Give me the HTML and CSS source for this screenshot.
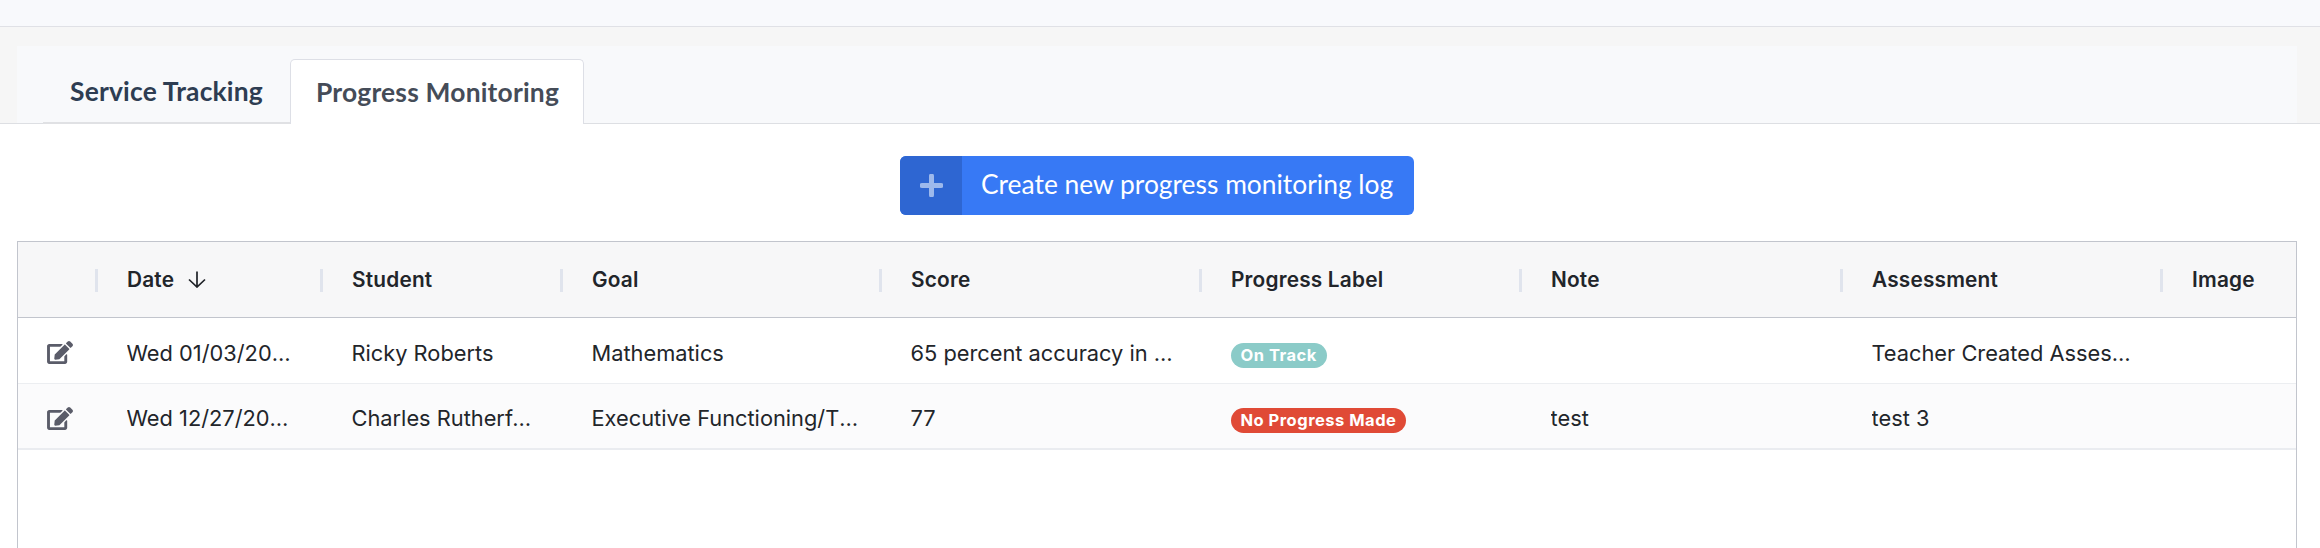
FILE: index.html
```html
<!DOCTYPE html>
<html>

<head>
    <title>Progress Monitoring</title>
    <meta charset="UTF-8">
    <link rel="stylesheet" href="styles.css">
</head>

<body>
    <div class="topbar"></div>
    <div class="tabs-area">
        <div class="tabs">
            <a class="tab">Service Tracking</a>
            <a class="tab tab--active">Progress Monitoring</a>
        </div>
    </div>
    <div class="content">
        <div class="actions">
            <button class="btn-create">
                <span class="btn-create__icon">
                    <svg width="23" height="23" viewBox="0 0 23 23">
                        <path d="M11.5 2v19M2 11.5h19" stroke="#9db9ec" stroke-width="5" stroke-linecap="round" fill="none"/>
                    </svg>
                </span>
                <span class="btn-create__text">Create new progress monitoring log</span>
            </button>
        </div>
        <div class="grid">
            <div class="row row--head">
                <div class="cell cell--icon"></div>
                <div class="cell cell--sep">Date
                    <svg class="sort" width="18" height="17" viewBox="0 0 18 17">
                        <path d="M9 0.5v15.5M1 8.5L9 16l8-7.5" stroke="#1f2227" stroke-width="1.7" fill="none"/>
                    </svg>
                </div>
                <div class="cell cell--sep">Student</div>
                <div class="cell cell--sep">Goal</div>
                <div class="cell cell--sep">Score</div>
                <div class="cell cell--sep">Progress Label</div>
                <div class="cell cell--sep">Note</div>
                <div class="cell cell--sep">Assessment</div>
                <div class="cell cell--sep">Image</div>
            </div>
            <div class="row">
                <div class="cell cell--icon">
                    <svg class="edit" width="26" height="23" viewBox="0 0 576 512">
                        <path d="M402.6 83.2l90.2 90.2c3.8 3.8 3.8 10 0 13.8L274.4 405.6l-92.8 10.3c-12.4 1.4-22.9-9.1-21.5-21.5l10.3-92.8L388.8 83.2c3.8-3.8 10-3.8 13.8 0zm162-22.9l-48.8-48.8c-15.2-15.2-39.9-15.2-55.2 0l-35.4 35.4c-3.8 3.8-3.8 10 0 13.8l90.2 90.2c3.8 3.8 10 3.8 13.8 0l35.4-35.4c15.2-15.3 15.2-40 0-55.2zM384 346.2V448H64V128h229.8c3.2 0 6.2-1.3 8.5-3.5l40-40c7.6-7.6 2.2-20.5-8.5-20.5H48C21.5 64 0 85.5 0 112v352c0 26.5 21.5 48 48 48h352c26.5 0 48-21.5 48-48V306.2c0-10.7-12.9-16-20.5-8.5l-40 40c-2.2 2.3-3.5 5.3-3.5 8.5z"/>
                    </svg>
                </div>
                <div class="cell"><span class="clip">Wed 01/03/2024</span></div>
                <div class="cell"><span class="clip">Ricky Roberts</span></div>
                <div class="cell cell--goal"><span class="clip">Mathematics</span></div>
                <div class="cell"><span class="clip">65 percent accuracy in math problems</span></div>
                <div class="cell"><span class="badge badge--track">On Track</span></div>
                <div class="cell"></div>
                <div class="cell"><span class="clip">Teacher Created Assessment</span></div>
                <div class="cell"></div>
            </div>
            <div class="row row--alt">
                <div class="cell cell--icon">
                    <svg class="edit" width="26" height="23" viewBox="0 0 576 512">
                        <path d="M402.6 83.2l90.2 90.2c3.8 3.8 3.8 10 0 13.8L274.4 405.6l-92.8 10.3c-12.4 1.4-22.9-9.1-21.5-21.5l10.3-92.8L388.8 83.2c3.8-3.8 10-3.8 13.8 0zm162-22.9l-48.8-48.8c-15.2-15.2-39.9-15.2-55.2 0l-35.4 35.4c-3.8 3.8-3.8 10 0 13.8l90.2 90.2c3.8 3.8 10 3.8 13.8 0l35.4-35.4c15.2-15.3 15.2-40 0-55.2zM384 346.2V448H64V128h229.8c3.2 0 6.2-1.3 8.5-3.5l40-40c7.6-7.6 2.2-20.5-8.5-20.5H48C21.5 64 0 85.5 0 112v352c0 26.5 21.5 48 48 48h352c26.5 0 48-21.5 48-48V306.2c0-10.7-12.9-16-20.5-8.5l-40 40c-2.2 2.3-3.5 5.3-3.5 8.5z"/>
                    </svg>
                </div>
                <div class="cell"><span class="clip">Wed 12/27/2023</span></div>
                <div class="cell"><span class="clip">Charles Rutherford</span></div>
                <div class="cell cell--goal"><span class="clip">Executive Functioning/Time Management</span></div>
                <div class="cell"><span class="clip">77</span></div>
                <div class="cell"><span class="badge badge--none">No Progress Made</span></div>
                <div class="cell"><span class="clip">test</span></div>
                <div class="cell"><span class="clip">test 3</span></div>
                <div class="cell"></div>
            </div>
        </div>
    </div>
</body>

</html>
```

FILE: styles.css
```css
* {
    box-sizing: border-box;
}

html,
body {
    height: 100%;
}

body {
    display: flex;
    flex-direction: column;
    margin: 0;
    overflow: hidden;
    background-color: #fff;
    font-family: Inter, "Liberation Sans", sans-serif;
    color: #212529;
}

.topbar {
    height: 27px;
    background-color: #f8f9fc;
    border-bottom: 1px solid #e0e1e6;
}

.tabs-area {
    height: 97px;
    padding: 19px 23px 0 17px;
    background-color: #f6f6f6;
    border-bottom: 1px solid #dddfe3;
}

.tabs {
    display: flex;
    height: 77px;
    padding: 13px 0 0 26px;
    background-color: #f8f9fb;
}

.tab {
    display: flex;
    align-items: center;
    width: 248px;
    height: 65px;
    padding: 0 27px;
    border-bottom: 2px solid #e0e1e4;
    font-family: Lato, sans-serif;
    font-size: 26.4px;
    font-weight: 700;
    letter-spacing: 0.2px;
    white-space: nowrap;
    color: #2e3d52;
}

.tab--active {
    width: 294px;
    padding: 0 25px;
    margin-left: -1px;
    background-color: #fff;
    border: 1px solid #dddfe6;
    border-bottom: none;
    border-radius: 5px 5px 0 0;
    color: #454c58;
}

.content {
    display: flex;
    flex: 1;
    flex-direction: column;
    padding: 0 23px 0 17px;
}

.actions {
    display: flex;
    justify-content: center;
    padding: 32px 0 26px;
}

.btn-create {
    display: flex;
    width: 514px;
    height: 59px;
    padding: 0;
    border: none;
    border-radius: 6px;
    overflow: hidden;
    background-color: #3779f5;
    color: #fff;
    font-family: Lato, sans-serif;
    font-size: 26.4px;
    font-weight: 400;
}

.btn-create__icon {
    display: flex;
    align-items: center;
    justify-content: center;
    width: 62px;
    height: 100%;
    background-color: #2e66d2;
}

.btn-create__text {
    align-self: center;
    padding: 0 0 3px 19px;
    white-space: nowrap;
}

.grid {
    flex: 1;
    border: 1.5px solid #c2c5cd;
    border-bottom: none;
}

.row {
    display: grid;
    grid-template-columns: 77px 225px 240px 319px 320px 320px 321px 320px 1fr;
    height: 66px;
    border-bottom: 1px solid #eceef1;
    font-size: 21.8px;
    color: #22252a;
}

.row--head {
    height: 76px;
    background-color: #f7f7f8;
    border-bottom: 1.5px solid #c2c5cd;
    font-size: 20.8px;
    font-weight: 600;
    letter-spacing: 0.2px;
}

.row--alt {
    background-color: #fbfbfc;
    border-bottom: 2px solid #eaecf0;
}

.cell {
    display: flex;
    align-items: center;
    min-width: 0;
    padding: 4px 26px 0 31.5px;
}

.row--head .cell {
    padding: 0 24px 0 32px;
}

.cell--icon {
    padding: 4px 0 0 29px;
}

.cell--goal {
    padding-right: 18px;
}

.cell--sep {
    position: relative;
}

.cell--sep::before {
    content: "";
    position: absolute;
    top: 27px;
    left: 0;
    width: 3px;
    height: 23px;
    background-color: #e0e4ed;
}

.clip {
    overflow: hidden;
    white-space: nowrap;
    text-overflow: ellipsis;
}

.sort {
    margin-left: 14px;
}

.edit {
    fill: #5a5c69;
}

.badge {
    padding: 0 10px;
    border-radius: 13px;
    margin-top: 5px;
    line-height: 25px;
    font-size: 16.5px;
    font-weight: 700;
    letter-spacing: 0.5px;
    color: #fff;
    white-space: nowrap;
}

.badge--track {
    background-color: #8bcbc8;
}

.badge--none {
    background-color: #e04a36;
}
```
